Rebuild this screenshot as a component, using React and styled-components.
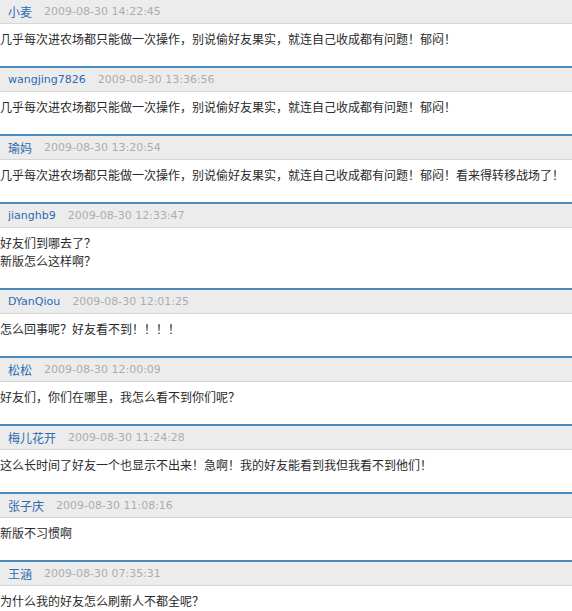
import React from 'react';
import styled, { createGlobalStyle } from 'styled-components';

const comments = [
  { name: '小麦', date: '2009-08-30 14:22:45', lines: ['几乎每次进农场都只能做一次操作，别说偷好友果实，就连自己收成都有问题！郁闷！'] },
  { name: 'wangjing7826', date: '2009-08-30 13:36:56', lines: ['几乎每次进农场都只能做一次操作，别说偷好友果实，就连自己收成都有问题！郁闷！'] },
  { name: '瑜妈', date: '2009-08-30 13:20:54', lines: ['几乎每次进农场都只能做一次操作，别说偷好友果实，就连自己收成都有问题！郁闷！看来得转移战场了！'] },
  { name: 'jianghb9', date: '2009-08-30 12:33:47', lines: ['好友们到哪去了？', '新版怎么这样啊？'] },
  { name: 'DYanQiou', date: '2009-08-30 12:01:25', lines: ['怎么回事呢？好友看不到！！！！'] },
  { name: '松松', date: '2009-08-30 12:00:09', lines: ['好友们，你们在哪里，我怎么看不到你们呢？'] },
  { name: '梅儿花开', date: '2009-08-30 11:24:28', lines: ['这么长时间了好友一个也显示不出来！急啊！我的好友能看到我但我看不到他们！'] },
  { name: '张子庆', date: '2009-08-30 11:08:16', lines: ['新版不习惯啊'] },
  { name: '王涵', date: '2009-08-30 07:35:31', lines: ['为什么我的好友怎么刷新人不都全呢？'] },
];

const GlobalStyle = createGlobalStyle`
  body {
    margin: 0;
    background: #ffffff;
    font-family: "Noto Sans CJK SC", sans-serif;
    overflow: hidden;
  }
`;

const List = styled.div`
  width: 572px;
  display: flex;
  flex-direction: column;
`;

const Item = styled.div`
  border-bottom: 2px solid #4a8bbf;
`;

const Header = styled.div`
  height: 23px;
  display: flex;
  align-items: center;
  gap: 12px;
  padding-left: 8px;
  background: #ececec;
  border-bottom: 1px solid #d6d6d6;
  font-family: "DejaVu Sans", "Noto Sans CJK SC", sans-serif;
  font-size: 11px;
`;

const Name = styled.a`
  color: #2e6ab1;
  text-decoration: none;
  font-size: ${(p) => (p.$cjk ? '12px' : '11px')};
  font-family: ${(p) => (p.$cjk ? '"Noto Sans CJK SC", sans-serif' : '"DejaVu Sans", sans-serif')};
`;

const Date = styled.span`
  color: #acacac;
`;

const Body = styled.div`
  padding: 6px 0 18px 0;
  font-size: 12px;
  line-height: 18px;
  color: #2a2a2a;
`;

const Line = styled.div`
  white-space: nowrap;
`;

export default function App() {
  return (
    <>
      <GlobalStyle />
      <List>
        {comments.map((c, i) => (
          <Item key={i}>
            <Header>
              <Name href="#" $cjk={!/^[\x00-\x7f]+$/.test(c.name)}>{c.name}</Name>
              <Date>{c.date}</Date>
            </Header>
            <Body>
              {c.lines.map((l, j) => (
                <Line key={j}>{l}</Line>
              ))}
            </Body>
          </Item>
        ))}
      </List>
    </>
  );
}
